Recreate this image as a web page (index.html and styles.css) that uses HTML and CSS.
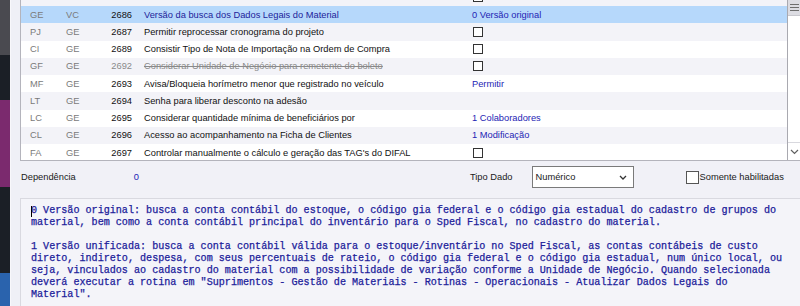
FILE: index.html
```html
<!DOCTYPE html>
<html lang="pt-BR">
<head>
    <meta charset="UTF-8">
    <title>Parâmetros</title>
    <link rel="stylesheet" href="styles.css">
</head>
<body>
    <div class="desktop-strip">
        <div class="strip-gray"></div>
        <div class="strip-dark"></div>
        <div class="strip-purple"></div>
        <div class="strip-dark"></div>
        <div class="strip-blue"></div>
    </div>
    <div class="window">
        <div class="grid">
            <div class="grid-body">
                <div class="rows">
                    <div class="row alt">
                        <span class="c1"></span><span class="c2"></span><span class="c3"></span><span class="c4"></span><span class="c5"><i class="box"></i></span>
                    </div>
                    <div class="row selected">
                        <span class="c1">GE</span><span class="c2">VC</span><span class="c3">2686</span><span class="c4">Versão da busca dos Dados Legais do Material</span><span class="c5 link">0 Versão original</span>
                    </div>
                    <div class="row alt">
                        <span class="c1">PJ</span><span class="c2">GE</span><span class="c3">2687</span><span class="c4">Permitir reprocessar cronograma do projeto</span><span class="c5"><i class="box"></i></span>
                    </div>
                    <div class="row">
                        <span class="c1">CI</span><span class="c2">GE</span><span class="c3">2689</span><span class="c4">Consistir Tipo de Nota de Importação na Ordem de Compra</span><span class="c5"><i class="box"></i></span>
                    </div>
                    <div class="row alt disabled">
                        <span class="c1">GF</span><span class="c2">GE</span><span class="c3">2692</span><span class="c4">Considerar Unidade de Negócio para remetente do boleto</span><span class="c5"><i class="box"></i></span>
                    </div>
                    <div class="row">
                        <span class="c1">MF</span><span class="c2">GE</span><span class="c3">2693</span><span class="c4">Avisa/Bloqueia horímetro menor que registrado no veículo</span><span class="c5 link">Permitir</span>
                    </div>
                    <div class="row alt">
                        <span class="c1">LT</span><span class="c2">GE</span><span class="c3">2694</span><span class="c4">Senha para liberar desconto na adesão</span><span class="c5"></span>
                    </div>
                    <div class="row">
                        <span class="c1">LC</span><span class="c2">GE</span><span class="c3">2695</span><span class="c4">Considerar quantidade mínima de beneficiários por</span><span class="c5 link">1 Colaboradores</span>
                    </div>
                    <div class="row alt">
                        <span class="c1">CL</span><span class="c2">GE</span><span class="c3">2696</span><span class="c4">Acesso ao acompanhamento na Ficha de Clientes</span><span class="c5 link">1 Modificação</span>
                    </div>
                    <div class="row">
                        <span class="c1">FA</span><span class="c2">GE</span><span class="c3">2697</span><span class="c4">Controlar manualmente o cálculo e geração das TAG's do DIFAL</span><span class="c5"><i class="box"></i></span>
                    </div>
                </div>
            </div>
            <div class="scrollbar">
                <div class="thumb">
                    <svg width="9" height="7" viewBox="0 0 9 7"><path d="M0 0.5H9M0 3.5H9M0 6.5H9" stroke="#6d6d6d" stroke-width="1"/></svg>
                </div>
                <div class="track"></div>
                <div class="arrow">
                    <svg width="9" height="6" viewBox="0 0 9 6"><path d="M1 1L4.5 4.5L8 1" fill="none" stroke="#606060" stroke-width="1.2"/></svg>
                </div>
            </div>
        </div>

        <div class="filters">
            <span class="label dep">Dependência</span>
            <span class="dep-value">0</span>
            <span class="label tipo">Tipo Dado</span>
            <div class="select">
                <span>Numérico</span>
                <svg width="8" height="5" viewBox="0 0 8 5"><path d="M1 1L4 4L7 1" fill="none" stroke="#333" stroke-width="1.3"/></svg>
            </div>
            <label class="only-enabled"><i class="box big"></i>Somente habilitadas</label>
        </div>

        <div class="memo"><span class="caret"></span>0 Versão original: busca a conta contábil do estoque, o código gia federal e o código gia estadual do cadastro de grupos do
material, bem como a conta contábil principal do inventário para o Sped Fiscal, no cadastro do material.

1 Versão unificada: busca a conta contábil válida para o estoque/inventário no Sped Fiscal, as contas contábeis de custo
direto, indireto, despesa, com seus percentuais de rateio, o código gia federal e o código gia estadual, num único local, ou
seja, vinculados ao cadastro do material com a possibilidade de variação conforme a Unidade de Negócio. Quando selecionada
deverá executar a rotina em "Suprimentos - Gestão de Materiais - Rotinas - Operacionais - Atualizar Dados Legais do
Material".</div>
    </div>
</body>
</html>
```

FILE: styles.css
```css
body {
    margin: 0;
    width: 800px;
    height: 306px;
    overflow: hidden;
    display: flex;
    background: #eff0f6;
    font-family: 'Liberation Sans', Arial, sans-serif;
    font-size: 9.3px;
    color: #1a1a1a;
}

.desktop-strip {
    width: 10px;
    display: flex;
    flex-direction: column;
    border-right: 1px solid #f8f8fb;
}

.strip-gray { height: 55px; background: #4a4a50; }
.strip-dark { height: 45px; background: #1b1f26; }
.strip-dark + .strip-purple + .strip-dark { height: 86px; }
.strip-purple { height: 87px; background: #7b2a6e; }
.strip-blue { flex: 1; background: #2a63ad; }

.window {
    flex: 1;
    padding-left: 9px;
    display: flex;
    flex-direction: column;
}

.grid {
    height: 160px;
    display: flex;
    border-left: 1px solid #b4b4bc;
    border-bottom: 1px solid #b4b4bc;
    background: #fff;
}

.grid-body {
    flex: 1;
    overflow: hidden;
    border-right: 1px solid #a9a9b0;
}

.rows {
    margin-top: -11.25px;
}

.row {
    height: 17.25px;
    display: grid;
    grid-template-columns: 45px 40px 26px 340px 1fr;
    align-items: center;
    background: #fff;
}

.row.alt { background: #f3f3f8; }
.row.selected { background: #b6d8fb; }

.c1 { padding-left: 9px; color: #7a7a7a; }
.c2 { color: #7a7a7a; }
.c3 { text-align: right; color: #111; }
.c4 { padding-left: 12px; white-space: nowrap; color: #111; }
.c5 { white-space: nowrap; }

.selected .c4 { color: #1d1d9a; }

.disabled .c3,
.disabled .c4 { color: #8a8a8a; }
.disabled .c4 { text-decoration: line-through; }

.link { color: #2424b4; }

.box {
    display: block;
    width: 8px;
    height: 8px;
    margin-left: 1px;
    border: 1px solid #333;
    background: #fff;
}

.scrollbar {
    width: 12px;
    display: flex;
    flex-direction: column;
    background: #fff;
}

.thumb {
    height: 15px;
    background: #dcdce2;
    border-bottom: 1px solid #c8c8ce;
    display: flex;
    align-items: center;
    justify-content: center;
}

.track { flex: 1; }

.arrow {
    height: 17px;
    border-top: 1px solid #d8d8de;
    display: flex;
    align-items: center;
    justify-content: center;
}

.filters {
    height: 37px;
    padding-bottom: 5px;
    box-sizing: border-box;
    display: flex;
    align-items: center;
    background: #f1f1f7;
}

.label { color: #1a1a1a; }
.dep { padding-left: 1px; }

.dep-value {
    margin-left: 58px;
    color: #2424b4;
}

.tipo { margin-left: 331px; }

.select {
    margin-left: 19px;
    width: 102px;
    height: 22px;
    border: 1px solid #7a7a7a;
    background: #fff;
    display: flex;
    align-items: center;
    justify-content: space-between;
    padding: 0 6px 0 3px;
    box-sizing: border-box;
}

.only-enabled {
    margin-left: 52px;
    display: flex;
    align-items: center;
}

.box.big {
    width: 11px;
    height: 11px;
    margin: 0 1px 0 0;
    border-color: #555;
}

.memo {
    flex: 1;
    border-top: 1px solid #d9d9e0;
    border-left: 1px solid #d9d9e0;
    background: #f4f4f9;
    padding: 6px 0 0 10px;
    font-family: 'Liberation Mono', 'Courier New', monospace;
    font-size: 10.1px;
    line-height: 12px;
    color: #20209a;
    -webkit-text-stroke: 0.25px #20209a;
    white-space: pre;
    position: relative;
}

.caret {
    position: absolute;
    left: 10px;
    top: 7px;
    width: 1px;
    height: 11px;
    background: #000;
}
```
